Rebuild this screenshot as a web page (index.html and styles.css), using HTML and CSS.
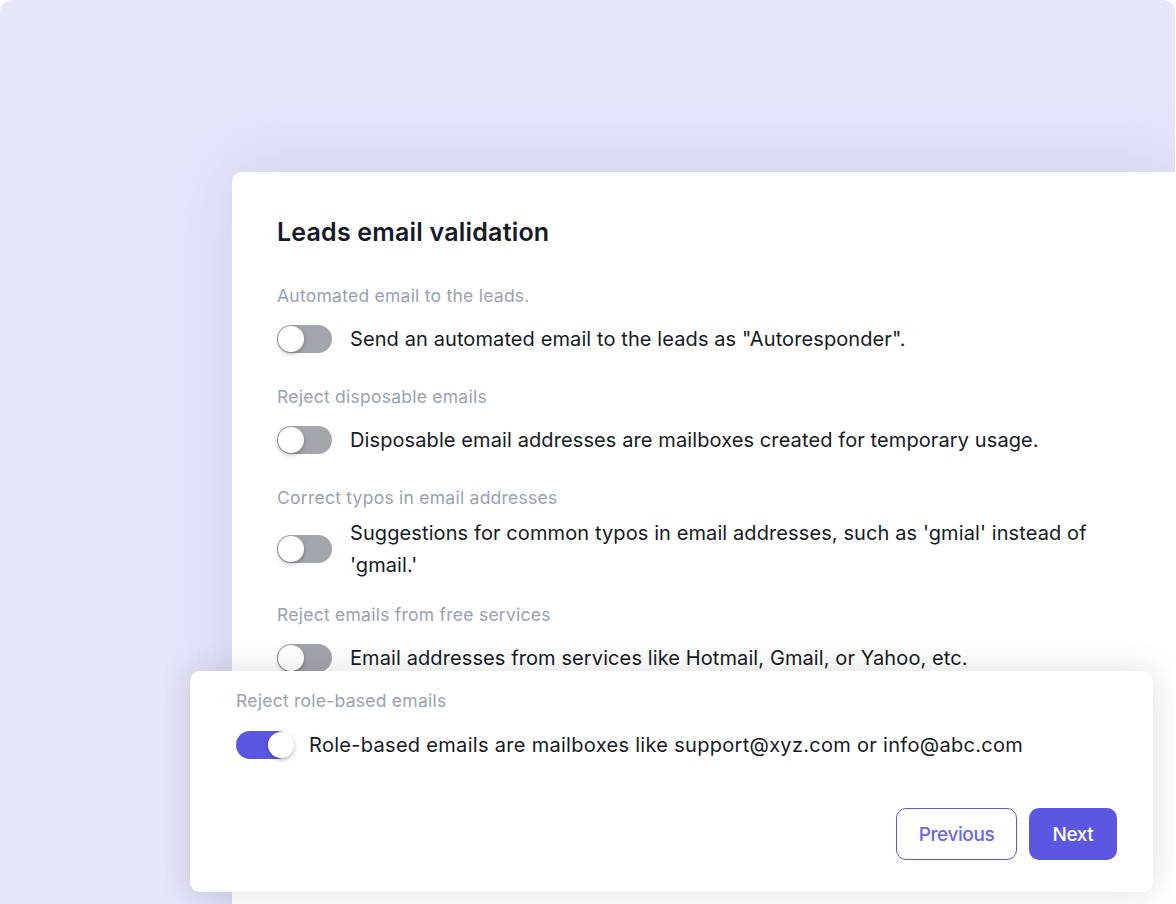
FILE: index.html
```html
<!DOCTYPE html>
<html lang="en">
<head>
<meta charset="utf-8">
<title>Leads email validation</title>
<link rel="stylesheet" href="styles.css">
</head>
<body>
<div class="backdrop">
  <section class="card">
    <h1 class="title">Leads email validation</h1>

    <div class="setting">
      <p class="label">Automated email to the leads.</p>
      <div class="row">
        <span class="toggle"><span class="knob"></span></span>
        <span class="desc">Send an automated email to the leads as "Autoresponder".</span>
      </div>
    </div>

    <div class="setting">
      <p class="label">Reject disposable emails</p>
      <div class="row">
        <span class="toggle"><span class="knob"></span></span>
        <span class="desc">Disposable email addresses are mailboxes created for temporary usage.</span>
      </div>
    </div>

    <div class="setting">
      <p class="label">Correct typos in email addresses</p>
      <div class="row">
        <span class="toggle"><span class="knob"></span></span>
        <span class="desc">Suggestions for common typos in email addresses, such as 'gmial' instead of 'gmail.'</span>
      </div>
    </div>

    <div class="setting">
      <p class="label">Reject emails from free services</p>
      <div class="row">
        <span class="toggle"><span class="knob"></span></span>
        <span class="desc">Email addresses from services like Hotmail, Gmail, or Yahoo, etc.</span>
      </div>
    </div>

    <div class="popout">
      <p class="label">Reject role-based emails</p>
      <div class="row">
        <span class="toggle on"><span class="knob"></span></span>
        <span class="desc">Role-based emails are mailboxes like support@xyz.com or info@abc.com</span>
      </div>
      <div class="actions">
        <button class="btn btn-outline">Previous</button>
        <button class="btn btn-primary">Next</button>
      </div>
    </div>
  </section>
</div>
</body>
</html>
```

FILE: styles.css
```css
* { box-sizing: border-box; }

html, body {
  margin: 0;
  padding: 0;
  background: #ffffff;
  overflow: hidden;
}

body {
  font-family: "Inter", "Lato", sans-serif;
  color: #161a23;
}

.backdrop {
  width: 1175px;
  height: 960px;
  background: #e5e6fa;
  border-radius: 12px;
  padding: 172px 0 0 232px;
  overflow: hidden;
}

.card {
  background: #ffffff;
  border-top-left-radius: 10px;
  height: 100%;
  padding: 44px 40px 0 45px;
  box-shadow: 0 -6px 70px rgba(95, 95, 160, 0.16);
}

.title {
  margin: 0 0 36px;
  font-size: 25px;
  line-height: 32px;
  font-weight: 600;
  color: #141a28;
  letter-spacing: 0.2px;
}

.setting {
  margin-bottom: 22px;
}

.label {
  margin: 0 0 7px;
  font-size: 17.5px;
  line-height: 24px;
  color: #99a1b2;
  letter-spacing: 0.25px;
}

.row {
  display: flex;
  align-items: center;
  gap: 18px;
  min-height: 48px;
}

.desc {
  font-size: 20px;
  line-height: 32px;
  color: #161a23;
  max-width: 745px;
  letter-spacing: 0.1px;
}

.toggle {
  flex: 0 0 55px;
  width: 55px;
  height: 28px;
  border-radius: 14px;
  background: #a3a5ac;
  display: flex;
  align-items: center;
  padding: 0 1px;
}

.knob {
  width: 26px;
  height: 26px;
  border-radius: 50%;
  background: #ffffff;
  box-shadow: 0 2px 4px rgba(0, 0, 0, 0.28);
}

.toggle.on {
  background: #5b57e0;
  justify-content: flex-end;
  padding: 0;
}

.toggle.on .knob {
  margin-right: -3px;
}

.popout {
  width: 963px;
  margin: -33px 0 0 -87px;
  background: #ffffff;
  border-radius: 10px;
  padding: 18px 36px 32px 46px;
  box-shadow: 0 0 34px rgba(0, 0, 0, 0.13);
  position: relative;
}

.popout .label {
  margin-bottom: 8px;
}

.popout .desc {
  max-width: none;
  letter-spacing: 0.3px;
}

.actions {
  display: flex;
  justify-content: flex-end;
  gap: 12px;
  margin-top: 39px;
}

.btn {
  height: 52px;
  border-radius: 10px;
  font-family: "Inter", "Lato", sans-serif;
  font-size: 19px;
  font-weight: 500;
  letter-spacing: -0.4px;
  padding: 0;
  cursor: pointer;
}

.btn-outline {
  width: 121px;
  background: #ffffff;
  color: #6a66f0;
  border: 1.5px solid #5b57e0;
}

.btn-primary {
  width: 88px;
  background: #5b57e0;
  color: #ffffff;
  border: none;
}
```
